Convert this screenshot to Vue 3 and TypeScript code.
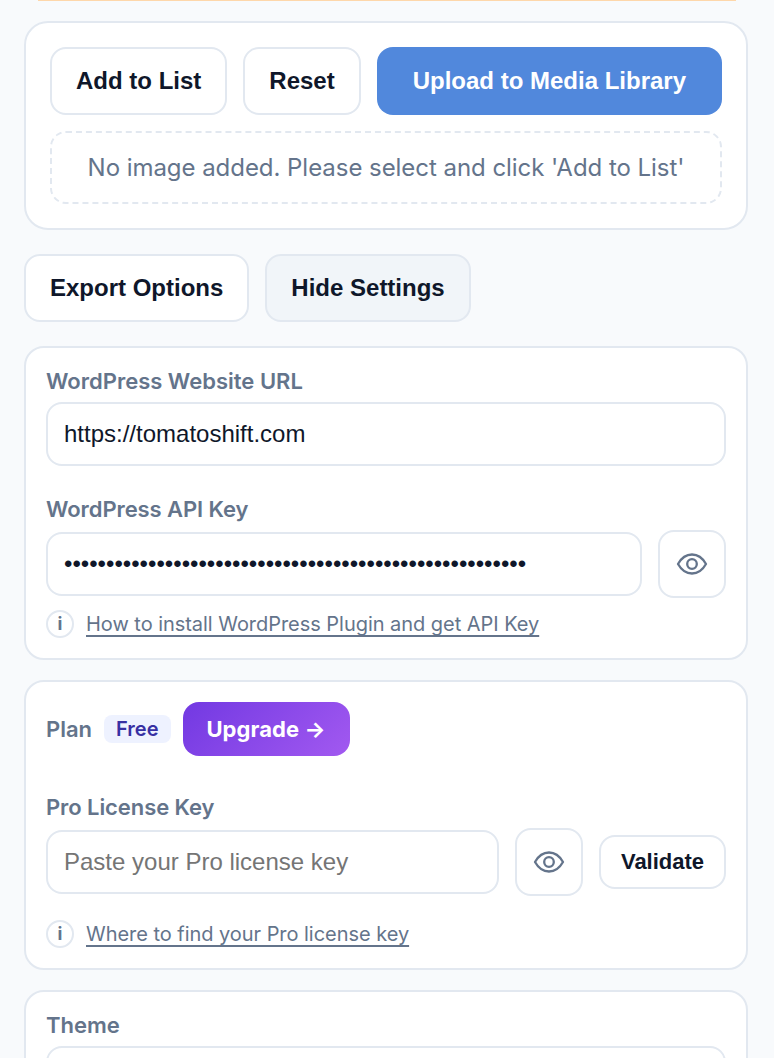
<script setup lang="ts">
import { ref } from 'vue'

const siteUrl = ref<string>('https://tomatoshift.com')
const apiKey = ref<string>('x'.repeat(55))
const licenseKey = ref<string>('')
const showApiKey = ref<boolean>(false)
const showLicense = ref<boolean>(false)
</script>

<template>
  <main class="panel">
    <div class="notice"></div>

    <section class="card upload">
      <div class="row">
        <button class="btn" type="button">Add to List</button>
        <button class="btn" type="button">Reset</button>
        <button class="btn primary" type="button">Upload to Media Library</button>
      </div>
      <div class="empty">No image added. Please select and click 'Add to List'</div>
    </section>

    <div class="row toolbar">
      <button class="btn" type="button">Export Options</button>
      <button class="btn active" type="button">Hide Settings</button>
    </div>

    <section class="card site">
      <label class="label">WordPress Website URL</label>
      <input v-model="siteUrl" class="input" type="text" />
      <label class="label second">WordPress API Key</label>
      <div class="row field">
        <input v-model="apiKey" class="input" :type="showApiKey ? 'text' : 'password'" />
        <button class="btn eye" type="button" @click="showApiKey = !showApiKey">
          <svg viewBox="0 0 32 32" width="32" height="32" fill="none" stroke="currentColor" stroke-width="2.3" stroke-linejoin="round">
            <path d="M2 16C5.6 9.6 10.6 6.5 16 6.5S26.4 9.6 30 16C26.4 22.4 21.4 25.5 16 25.5S5.6 22.4 2 16Z" />
            <circle cx="16" cy="16" r="4.8" />
          </svg>
        </button>
      </div>
      <div class="help">
        <span class="info">i</span>
        <a class="link">How to install WordPress Plugin and get API Key</a>
      </div>
    </section>

    <section class="card license">
      <div class="plan">
        <span class="label">Plan</span>
        <span class="badge">Free</span>
        <a class="upgrade">Upgrade →</a>
      </div>
      <label class="label tight">Pro License Key</label>
      <div class="row field">
        <input v-model="licenseKey" class="input" :type="showLicense ? 'text' : 'password'" placeholder="Paste your Pro license key" />
        <button class="btn eye" type="button" @click="showLicense = !showLicense">
          <svg viewBox="0 0 32 32" width="32" height="32" fill="none" stroke="currentColor" stroke-width="2.3" stroke-linejoin="round">
            <path d="M2 16C5.6 9.6 10.6 6.5 16 6.5S26.4 9.6 30 16C26.4 22.4 21.4 25.5 16 25.5S5.6 22.4 2 16Z" />
            <circle cx="16" cy="16" r="4.8" />
          </svg>
        </button>
        <button class="btn validate" type="button">Validate</button>
      </div>
      <div class="help spaced">
        <span class="info">i</span>
        <a class="link">Where to find your Pro license key</a>
      </div>
    </section>

    <section class="card theme">
      <label class="label">Theme</label>
      <div class="input"></div>
    </section>
  </main>
</template>

<style>
body {
  margin: 0;
  background: #f8fafc;
}
</style>

<style scoped>
.panel,
.panel * {
  box-sizing: border-box;
}
.panel {
  height: 1058px;
  overflow: hidden;
  padding: 0 26px 0 24px;
  font-family: Inter, sans-serif;
  color: #64748b;
  background: #f8fafc;
}
.notice {
  height: 1px;
  margin: 0 12px 20px 14px;
  background: #fed7aa;
}
.card {
  background: #fff;
  border: 2px solid #e2e8f0;
  border-radius: 20px;
  padding: 20px;
}
.upload {
  height: 209px;
  padding: 24px;
  border-radius: 24px;
}
.row {
  display: flex;
  align-items: center;
  gap: 16px;
}
.btn {
  flex: none;
  height: 68px;
  margin: 0;
  padding: 0 24px;
  border: 2px solid #e2e8f0;
  border-radius: 16px;
  background: #fff;
  color: #0f172a;
  font: 700 24px/28px "Liberation Sans", Arial, sans-serif;
  white-space: nowrap;
}
.btn.primary {
  flex: 1;
  border: 0;
  background: #5188dc;
  color: #fff;
}
.btn.active {
  background: #f1f5f9;
}
.empty {
  height: 73px;
  margin-top: 16px;
  border: 2px dashed #e2e8f0;
  border-radius: 16px;
  font-size: 24px;
  letter-spacing: -0.045px;
  line-height: 69px;
  text-align: center;
  white-space: nowrap;
}
.toolbar {
  margin: 24px 0;
}
.label {
  display: block;
  height: 26px;
  font-size: 22px;
  font-weight: 600;
  line-height: 26px;
}
.label.second,
.label.tight {
  letter-spacing: -0.08px;
}
.input {
  display: block;
  width: 100%;
  min-width: 0;
  height: 64px;
  margin: 0;
  padding: 0 16px;
  border: 2px solid #e2e8f0;
  border-radius: 16px;
  background: #fff;
  color: #0f172a;
  font: 400 24px/28px "Liberation Sans", Arial, sans-serif;
  outline: none;
}
.input::placeholder {
  color: #757575;
}
.site {
  height: 314px;
}
.site .input {
  margin-top: 8px;
}
.site .field .input,
.license .field .input {
  flex: 1;
  margin: 0;
}
.label.second {
  margin-top: 30px;
}
.field {
  margin-top: 8px;
}
.btn.eye {
  display: flex;
  align-items: center;
  justify-content: center;
  width: 68px;
  padding: 0;
  color: #64748b;
}
.help {
  display: flex;
  align-items: center;
  gap: 12px;
  height: 28px;
  margin-top: 12px;
}
.help.spaced {
  margin-top: 24px;
}
.info {
  width: 28px;
  height: 28px;
  border: 2px solid #e2e8f0;
  border-radius: 50%;
  font-size: 18px;
  font-weight: 700;
  line-height: 23px;
  text-align: center;
}
.link {
  font-size: 20px;
  letter-spacing: -0.04px;
  line-height: 28px;
  text-decoration: underline;
  text-decoration-thickness: 2px;
  text-underline-offset: 4px;
  white-space: nowrap;
}
.license {
  height: 290px;
  margin-top: 20px;
}
.plan {
  display: flex;
  align-items: center;
  gap: 12px;
  height: 54px;
  margin-bottom: 38px;
}
.badge {
  height: 28px;
  padding: 0 12px;
  border-radius: 8px;
  background: #eef2ff;
  color: #3730a3;
  font-size: 20px;
  font-weight: 600;
  line-height: 28px;
}
.upgrade {
  width: 167px;
  height: 54px;
  border-radius: 16px;
  background: linear-gradient(135deg, #7239e2, #a259f0);
  color: #fff;
  font-size: 22px;
  font-weight: 700;
  letter-spacing: 0.08px;
  line-height: 54px;
  text-align: center;
  white-space: nowrap;
}
.btn.validate {
  width: 127px;
  height: 54px;
  padding: 0;
  font-size: 22px;
}
.theme {
  height: 140px;
  margin-top: 20px;
}
.theme .input {
  margin-top: 8px;
}
</style>
